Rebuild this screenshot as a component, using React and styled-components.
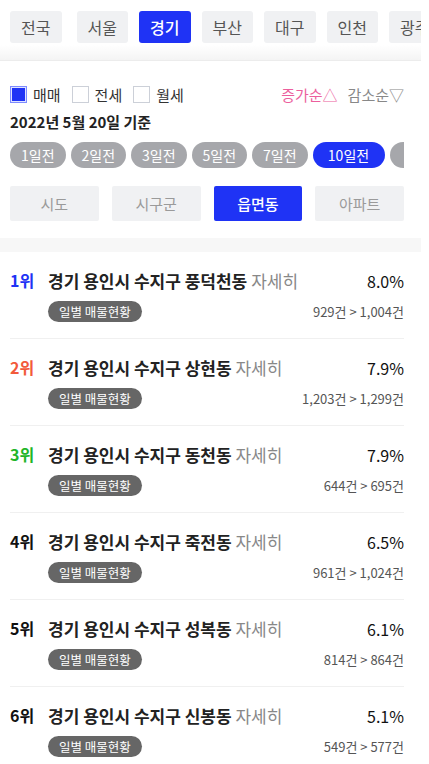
import React from "react";
import styled, { createGlobalStyle } from "styled-components";

const BLUE = "#1f33f5";

const Global = createGlobalStyle`
  html, body { margin: 0; padding: 0; background: #fff; }
  body { font-family: "Noto Sans CJK KR", "Noto Sans", sans-serif; color: #222; }
  * { box-sizing: border-box; }
`;

const Page = styled.div`
  width: 421px;
  background: #fff;
  overflow: hidden;
`;

const Header = styled.div`
  height: 61px;
  padding: 11px 0 0 10px;
  background: linear-gradient(to bottom, #fff 0, #fff 45px, #f4f4f4 60px);
  border-bottom: 1px solid #ececec;
`;

const RegionRow = styled.div`
  display: flex;
  gap: 11px;
  overflow: hidden;
`;

const RegionTab = styled.div`
  flex: 0 0 51.5px;
  height: 32px;
  border-radius: 3px;
  display: flex;
  align-items: center;
  justify-content: center;
  font-size: 16px;
  background: ${(p) => (p.$active ? BLUE : "#f0f1f3")};
  color: ${(p) => (p.$active ? "#fff" : "#555")};
  font-weight: ${(p) => (p.$active ? 500 : 400)};
  margin-right: ${(p) => (p.$first ? "4px" : "0")};
  white-space: nowrap;
`;

const Filters = styled.div`
  padding: 24px 17px 17px 10px;
`;

const OptionRow = styled.div`
  display: flex;
  align-items: center;
  justify-content: space-between;
  height: 18px;
`;

const Checks = styled.div`
  display: flex;
  align-items: center;
  gap: 11px;
`;

const CheckItem = styled.label`
  display: flex;
  align-items: center;
  gap: 6px;
  font-size: 15px;
  color: #333;
`;

const Box = styled.span`
  width: 17px;
  height: 17px;
  border: 1px solid ${(p) => (p.$checked ? "#7d8bff" : "#ccd0d8")};
  background: ${(p) => (p.$checked ? BLUE : "#fff")};
  box-shadow: ${(p) => (p.$checked ? "inset 0 0 0 1px #dfe3ff" : "none")};
`;

const Sorts = styled.div`
  display: flex;
  gap: 10px;
  font-size: 15px;
`;

const SortBtn = styled.span`
  color: ${(p) => (p.$active ? "#ec5f9d" : "#888")};
`;

const DateLine = styled.div`
  margin-top: 8px;
  line-height: 22px;
  font-size: 15px;
  font-weight: 700;
  color: #222;
`;

const PillRow = styled.div`
  margin-top: 9px;
  display: flex;
  gap: 5px;
  overflow: hidden;
`;

const Pill = styled.div`
  flex: 0 0 ${(p) => (p.$wide ? "72px" : "55.5px")};
  height: 26px;
  border-radius: 13px;
  display: flex;
  align-items: center;
  justify-content: center;
  font-size: 14px;
  color: #fff;
  background: ${(p) => (p.$active ? BLUE : "#a6a7ab")};
  white-space: nowrap;
`;

const SegRow = styled.div`
  margin-top: 18px;
  display: grid;
  grid-template-columns: repeat(4, 1fr);
  gap: 13px;
`;

const Seg = styled.div`
  height: 35px;
  border-radius: 2px;
  display: flex;
  align-items: center;
  justify-content: center;
  font-size: 15px;
  background: ${(p) => (p.$active ? BLUE : "#f0f1f3")};
  color: ${(p) => (p.$active ? "#fff" : "#9a9a9a")};
  font-weight: ${(p) => (p.$active ? 500 : 400)};
`;

const Band = styled.div`
  height: 14px;
  background: #f7f7f7;
`;

const List = styled.div`
  padding: 0 17px 0 10px;
`;

const Item = styled.div`
  height: 87px;
  padding-top: 17px;
  display: flex;
  border-bottom: 1px solid #f0f0f0;
`;

const Rank = styled.div`
  width: 38px;
  line-height: 22px;
  font-size: 16px;
  font-weight: 700;
  color: ${(p) => p.$color};
`;

const Main = styled.div`
  flex: 1;
  display: flex;
  flex-direction: column;
  gap: 8px;
`;

const Line = styled.div`
  display: flex;
  align-items: center;
  justify-content: space-between;
`;

const Title = styled.div`
  line-height: 22px;
  font-size: 17px;
  font-weight: 700;
  color: #222;
  white-space: nowrap;
`;

const More = styled.span`
  font-weight: 400;
  color: #888;
`;

const Percent = styled.div`
  font-size: 16px;
  color: #111;
`;

const Badge = styled.div`
  height: 21px;
  padding: 0 11px;
  border-radius: 11px;
  background: #666;
  color: #fff;
  font-size: 12.5px;
  display: flex;
  align-items: center;
  white-space: nowrap;
`;

const Count = styled.div`
  font-size: 13px;
  color: #555;
`;

const regions = ["전국", "서울", "경기", "부산", "대구", "인천", "광주"];
const pills = ["1일전", "2일전", "3일전", "5일전", "7일전", "10일전", "15일전"];
const segs = ["시도", "시구군", "읍면동", "아파트"];
const rankColors = ["#1f33f5", "#f25a3b", "#22b528", "#111", "#111", "#111"];
const items = [
  ["풍덕천동", "8.0%", "929건 > 1,004건"],
  ["상현동", "7.9%", "1,203건 > 1,299건"],
  ["동천동", "7.9%", "644건 > 695건"],
  ["죽전동", "6.5%", "961건 > 1,024건"],
  ["성복동", "6.1%", "814건 > 864건"],
  ["신봉동", "5.1%", "549건 > 577건"],
];

export default function App() {
  return (
    <Page>
      <Global />
      <Header>
        <RegionRow>
          {regions.map((r, i) => (
            <RegionTab key={r} $first={i === 0} $active={r === "경기"}>
              {r}
            </RegionTab>
          ))}
        </RegionRow>
      </Header>
      <Filters>
        <OptionRow>
          <Checks>
            <CheckItem><Box $checked />매매</CheckItem>
            <CheckItem><Box />전세</CheckItem>
            <CheckItem><Box />월세</CheckItem>
          </Checks>
          <Sorts>
            <SortBtn $active>증가순△</SortBtn>
            <SortBtn>감소순▽</SortBtn>
          </Sorts>
        </OptionRow>
        <DateLine>2022년 5월 20일 기준</DateLine>
        <PillRow>
          {pills.map((p) => (
            <Pill key={p} $wide={p.length > 3} $active={p === "10일전"}>
              {p}
            </Pill>
          ))}
        </PillRow>
        <SegRow>
          {segs.map((s) => (
            <Seg key={s} $active={s === "읍면동"}>{s}</Seg>
          ))}
        </SegRow>
      </Filters>
      <Band />
      <List>
        {items.map(([name, pct, cnt], i) => (
          <Item key={name}>
            <Rank $color={rankColors[i]}>{i + 1}위</Rank>
            <Main>
              <Line>
                <Title>
                  경기 용인시 수지구 {name} <More>자세히</More>
                </Title>
                <Percent>{pct}</Percent>
              </Line>
              <Line>
                <Badge>일별 매물현황</Badge>
                <Count>{cnt}</Count>
              </Line>
            </Main>
          </Item>
        ))}
      </List>
    </Page>
  );
}
